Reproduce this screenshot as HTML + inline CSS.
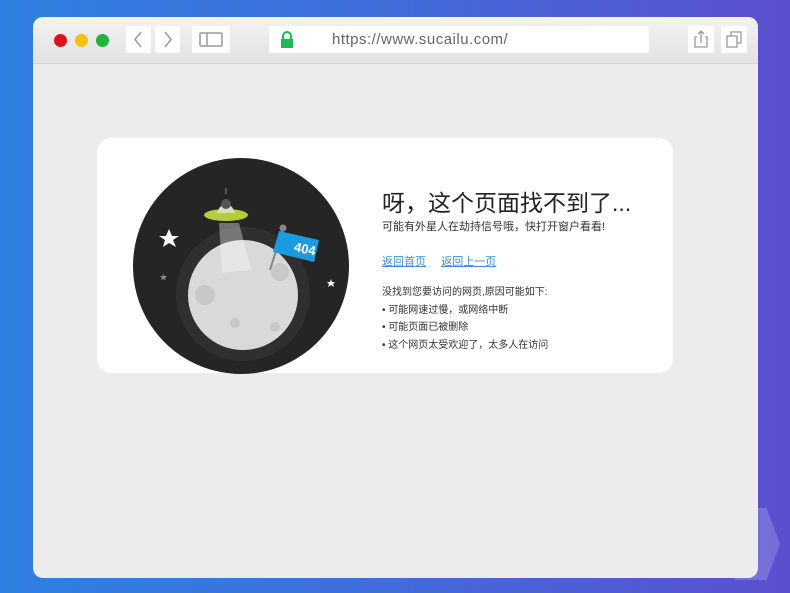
<!DOCTYPE html>
<html><head><meta charset="utf-8"><style>
*{margin:0;padding:0;box-sizing:border-box}
body{width:790px;height:593px;overflow:hidden;background:linear-gradient(90deg,#2f80e2 0%,#3f6fdc 45%,#5b4fcf 100%);font-family:"Liberation Sans","Noto Sans CJK SC",sans-serif;position:relative}
.hex{position:absolute;left:735px;top:508px;width:45px;height:72px;background:rgba(255,255,255,.18);clip-path:polygon(0 0,70% 0,100% 50%,70% 100%,0 100%)}
.win{position:absolute;left:33px;top:17px;width:725px;height:561px;background:#ececec;border-radius:10px;overflow:hidden}
.bar{height:47px;background:linear-gradient(#f3f3f3,#e2e2e2);border-bottom:1px solid #d6d6d6;position:relative}
.dot{position:absolute;top:17px;width:13px;height:13px;border-radius:50%}
.btn{position:absolute;top:9px;height:27px;background:#fff;border-radius:2px}
.url{position:absolute;left:236px;top:9px;width:380px;height:27px;background:#fff;border-radius:2px;font-size:15px;color:#666;letter-spacing:.5px}
.card{position:absolute;left:64px;top:121px;width:576px;height:235px;background:#fff;border-radius:14px}
h1{position:absolute;left:285px;top:46px;font-size:23px;font-weight:normal;color:#222;white-space:nowrap}
.t{position:absolute;left:285px;font-size:11px;color:#333;white-space:nowrap}
a{color:#3b8fd6;text-decoration:underline}
</style></head><body>
<div class="hex"></div>
<div class="win">
 <div class="bar">
  <div class="dot" style="left:21px;background:#e0131b"></div>
  <div class="dot" style="left:42px;background:#f6c20d"></div>
  <div class="dot" style="left:63px;background:#20b53a"></div>
  <div class="btn" style="left:93px;width:25px"><svg width="25" height="27"><path d="M15 6L9 13.5L15 21" stroke="#999" fill="none" stroke-width="1.5"/></svg></div>
  <div class="btn" style="left:122px;width:25px"><svg width="25" height="27"><path d="M10 6L16 13.5L10 21" stroke="#999" fill="none" stroke-width="1.5"/></svg></div>
  <div class="btn" style="left:159px;width:38px"><svg width="38" height="27"><rect x="8" y="7" width="22" height="13" rx="1" stroke="#999" fill="none" stroke-width="1.5"/><line x1="15" y1="7" x2="15" y2="20" stroke="#999" stroke-width="1.5"/></svg></div>
  <div class="url"><svg style="position:absolute;left:10px;top:5px" width="16" height="17"><path d="M4 8V5a4 4 0 0 1 8 0v3" stroke="#1db954" stroke-width="2" fill="none"/><rect x="2" y="8" width="12" height="9" fill="#1db954"/></svg><span style="position:absolute;left:63px;top:5px">https://www.sucailu.com/</span></div>
  <div class="btn" style="left:655px;width:26px"><svg width="26" height="27"><path d="M9 11H7v10h12V11h-2M13 17V5M10 8l3-3 3 3" stroke="#999" fill="none" stroke-width="1.3"/></svg></div>
  <div class="btn" style="left:688px;width:26px"><svg width="26" height="27"><rect x="6" y="10" width="10" height="11" stroke="#999" fill="none" stroke-width="1.3"/><path d="M10 10V6h10v11h-4" stroke="#999" fill="none" stroke-width="1.3"/></svg></div>
 </div>
 <div class="card">
  <svg style="position:absolute;left:36px;top:20px" width="218" height="218" viewBox="0 0 218 218">
   <circle cx="108" cy="108" r="108" fill="#252525"/>
   <circle cx="110" cy="136" r="67" fill="#2f2f2f"/>
   <circle cx="110" cy="137" r="55" fill="#d9d9d9"/>
   <circle cx="72" cy="137" r="10" fill="#c8c8c8"/>
   <circle cx="147" cy="114" r="9" fill="#c8c8c8"/>
   <circle cx="102" cy="165" r="5" fill="#c8c8c8"/>
   <circle cx="142" cy="169" r="5" fill="#c8c8c8"/>
   <polygon points="86,65 106,65 118,112 89,115" fill="rgba(255,255,255,.35)"/>
   <ellipse cx="93" cy="57" rx="22" ry="6" fill="#b8cc3a"/>
   <path d="M84 55a10 16 0 0 1 18 0z" fill="#d8e0b8"/>
   <circle cx="93" cy="46" r="5" fill="#555"/>
   <line x1="93" y1="30" x2="93" y2="36" stroke="#888"/>
   <line x1="137" y1="112" x2="150" y2="71" stroke="#888" stroke-width="2"/>
   <circle cx="150" cy="70" r="3.5" fill="#888"/>
   <polygon points="146,73 186,82 181,104 140,94" fill="#1a9be0"/>
   <text x="161" y="93" font-size="13" font-weight="bold" fill="#fff" transform="rotate(12 161 90)" font-family="Liberation Sans,sans-serif">404</text>
   <polygon points="36,71 39,78 46,78 40,82 43,89 36,85 30,89 32,82 26,78 33,78" fill="#fff"/>
   <polygon points="198,121 199,124 202,124 200,126 201,129 198,127 195,129 196,126 194,124 197,124" fill="#fff"/>
   <polygon points="30,115 31,118 34,118 32,120 33,122 30,121 28,122 29,120 27,118 30,118" fill="#888"/>
  </svg>
  <h1>呀，这个页面找不到了...</h1>
  <div class="t" style="top:80px">可能有外星人在劫持信号哦，快打开窗户看看!</div>
  <div class="t" style="top:115px"><a>返回首页</a>&nbsp;&nbsp;&nbsp;&nbsp;&nbsp;<a>返回上一页</a></div>
  <div class="t" style="top:145px;font-size:10px">没找到您要访问的网页,原因可能如下:</div>
  <div class="t" style="top:163px;font-size:10px">• 可能网速过慢，或网络中断</div>
  <div class="t" style="top:180px;font-size:10px">• 可能页面已被删除</div>
  <div class="t" style="top:198px;font-size:10px">• 这个网页太受欢迎了，太多人在访问</div>
 </div>
</div>
</body></html>
